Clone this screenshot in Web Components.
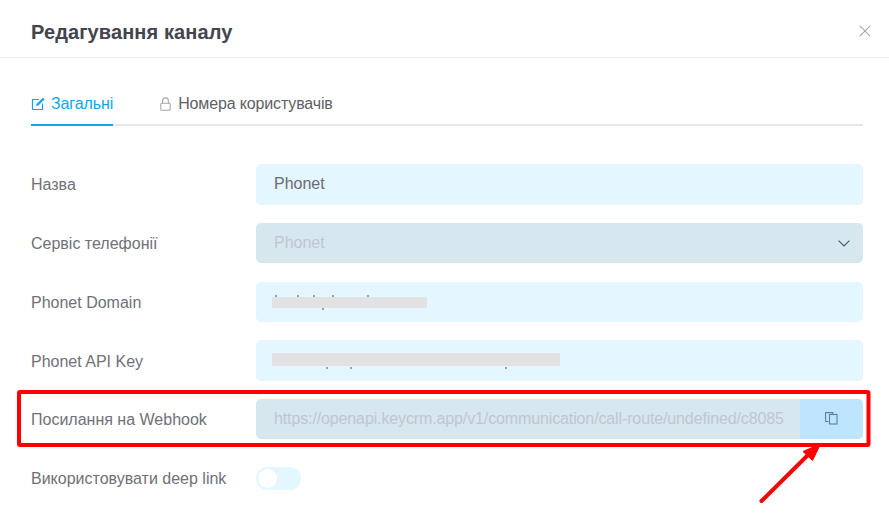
<!DOCTYPE html>
<html lang="uk">
<head>
<meta charset="utf-8">
<title>Редагування каналу</title>
<style>
  html, body { margin: 0; padding: 0; background: #fff; overflow: hidden; }
  body { font-family: "Liberation Sans", Arial, sans-serif; }
</style>
</head>
<body>
<edit-dialog heading="Редагування каналу">
  <tab-bar>
    <tab-item active icon="edit">Загальні</tab-item>
    <tab-item icon="lock">Номера користувачів</tab-item>
  </tab-bar>
  <form-row label="Назва"><text-box value="Phonet"></text-box></form-row>
  <form-row label="Сервіс телефонії"><text-box value="Phonet" disabled select></text-box></form-row>
  <form-row label="Phonet Domain"><text-box smudge="155" smudge-top="15" smudge-height="11" specks="19,13 41,13 57,13 76,13 111,13 66,26"></text-box></form-row>
  <form-row label="Phonet API Key"><text-box smudge="288" smudge-top="13" smudge-height="13" specks="70,27 94,27 249,27"></text-box></form-row>
  <form-row label="Посилання на Webhook"><text-box class="url" value="https://openapi.keycrm.app/v1/communication/call-route/undefined/c8085" disabled copy></text-box></form-row>
  <form-row label="Використовувати deep link"><toggle-switch></toggle-switch></form-row>
</edit-dialog>
<red-callout></red-callout>

<script>
class EditDialog extends HTMLElement {
    constructor() {
        super()
        this.attachShadow({mode: "open"})
    }
    connectedCallback() {
        this.shadowRoot.innerHTML = `
        <style>
            :host { display: block; width: 889px; height: 518px; overflow: hidden; box-sizing: border-box; }
            header {
                display: flex;
                align-items: center;
                justify-content: space-between;
                height: 58px;
                padding: 8px 18px 0 31px;
                box-sizing: border-box;
                border-bottom: 1px solid #ebedf0;
            }
            h1 { margin: 0; font-size: 20px; font-weight: 700; color: #43444d; letter-spacing: .1px; }
            svg { display: block; margin-top: -3px; }
            main { padding: 0 26px 0 31px; }
        </style>
        <header>
            <h1>${this.getAttribute("heading")}</h1>
            <svg width="12" height="12" viewBox="0 0 12 12" fill="none" stroke="#a4a7b0" stroke-width="1.1"><path d="M.7.7l10.6 10.6M11.3.7L.7 11.3"/></svg>
        </header>
        <main><slot></slot></main>`
    }
}

class TabBar extends HTMLElement {
    constructor() {
        super()
        this.attachShadow({mode: "open"})
        this.shadowRoot.innerHTML = `
        <style>
            :host {
                display: flex;
                gap: 47px;
                height: 68px;
                margin-bottom: 38.3px;
                box-sizing: border-box;
                border-bottom: 2px solid #e4e7ed;
            }
        </style>
        <slot></slot>`
    }
}

class TabItem extends HTMLElement {
    constructor() {
        super()
        this.attachShadow({mode: "open"})
    }
    connectedCallback() {
        const icons = {
            edit: `<svg width="14" height="14" viewBox="0 0 14 14" fill="none" stroke="currentColor" stroke-width="1.2"><path d="M8 2.5H1.5v10h10V6.5"/><path d="M5.5 8.7l.4-1.9L12 1l1.3 1.3-6 5.9z" fill="currentColor" stroke-width=".6"/></svg>`,
            lock: `<svg width="11" height="14" viewBox="0 0 11 14" fill="none" stroke="#a9a9a9" stroke-width="1.1"><path d="M2.6 6.5V3.8a2.9 2.9 0 0 1 5.8 0v2.7"/><rect x=".8" y="6.3" width="9.4" height="6.9" rx=".8"/></svg>`
        }
        this.shadowRoot.innerHTML = `
        <style>
            :host {
                display: flex;
                align-items: center;
                gap: 7px;
                height: 68px;
                padding-top: 24px;
                box-sizing: border-box;
                margin-bottom: -2px;
                font-size: 16px;
                letter-spacing: -.15px;
                color: #5f6068;
            }
            :host([active]) { gap: 6px; letter-spacing: -.1px; color: #0ba8ee; border-bottom: 2px solid #0ba8ee; padding-top: 26px; }
            svg { display: block; }
        </style>
        ${icons[this.getAttribute("icon")]}<slot></slot>`
    }
}

class FormRow extends HTMLElement {
    constructor() {
        super()
        this.attachShadow({mode: "open"})
    }
    connectedCallback() {
        this.shadowRoot.innerHTML = `
        <style>
            :host {
                display: grid;
                grid-template-columns: 225px 607px;
                align-items: center;
                height: 40.4px;
                margin-bottom: 18.3px;
                font-size: 16px;
                color: #707178;
            }
            .label { padding-top: 2px; }
        </style>
        <div class="label">${this.getAttribute("label")}</div>
        <div><slot></slot></div>`
    }
}

class TextBox extends HTMLElement {
    constructor() {
        super()
        this.attachShadow({mode: "open"})
    }
    connectedCallback() {
        const value = this.getAttribute("value") || ""
        const smudge = this.getAttribute("smudge")
        const chevron = this.hasAttribute("select")
            ? `<svg class="chevron" width="12" height="7" viewBox="0 0 12 7" fill="none" stroke="#4d5560" stroke-width="1.1"><path d="M.6.6L6 6l5.4-5.4"/></svg>` : ""
        const copy = this.hasAttribute("copy")
            ? `<button tabindex="-1"><svg width="13" height="13" viewBox="0 0 13 13" fill="none" stroke="#5a7fa3" stroke-width="1.1"><path d="M3.5 9.5H.6V.6h7.2v1.9"/><rect x="4.5" y="2.5" width="7.5" height="9.5" fill="#bde5fd"/></svg></button>` : ""
        // small bits of the hidden text that stick out around the grey smudge
        const specks = (this.getAttribute("specks") || "").split(" ").filter(Boolean).map(p => {
            const [x, y] = p.split(",")
            return `<b style="left:${x}px;top:${y}px"></b>`
        }).join("")
        const smudgeBox = smudge
            ? `<div class="smudge" style="width:${smudge}px;top:${this.getAttribute("smudge-top")}px;height:${this.getAttribute("smudge-height")}px"></div>` : ""
        this.shadowRoot.innerHTML = `
        <style>
            :host {
                display: flex;
                position: relative;
                height: 40.4px;
                border-radius: 5px;
                overflow: hidden;
                background: #e4f6ff;
                color: #6b6c74;
                font-size: 16px;
            }
            :host([disabled]) { background: #d7e7f0; color: #c0c6d0; }
            :host(.url) { letter-spacing: -.125px; }
            .value {
                flex: 1;
                min-width: 0;
                padding: 0 18px;
                display: flex;
                align-items: center;
                white-space: nowrap;
            }
            .chevron { align-self: center; margin-right: 13px; }
            button {
                width: 63px;
                border: 0;
                padding: 0 0 2px;
                background: #bde5fd;
                display: flex;
                align-items: center;
                justify-content: center;
            }
            .smudge {
                position: absolute;
                left: 16px;
                border-radius: 2px;
                background: #e2e2e2;
                filter: blur(.6px);
            }
            b {
                position: absolute;
                width: 1.5px;
                height: 2px;
                background: #a0a1a6;
                filter: blur(.3px);
            }
        </style>
        <div class="value"><span>${value}</span></div>
        ${chevron}${copy}
        ${smudgeBox}${specks}`
    }
}

class ToggleSwitch extends HTMLElement {
    constructor() {
        super()
        this.attachShadow({mode: "open"})
        this.shadowRoot.innerHTML = `
        <style>
            :host {
                display: block;
                position: relative;
                width: 45px;
                height: 23px;
                margin-top: 1px;
                border-radius: 12px;
                background: #e4f6ff;
            }
            i {
                position: absolute;
                left: 2px;
                top: 2px;
                width: 19px;
                height: 19px;
                border-radius: 50%;
                background: #fff;
            }
        </style>
        <i></i>`
    }
}

// annotation drawn on top of the screenshot
class RedCallout extends HTMLElement {
    constructor() {
        super()
        this.attachShadow({mode: "open"})
        this.shadowRoot.innerHTML = `
        <style>
            :host { position: absolute; left: 0; top: 0; width: 889px; height: 518px; pointer-events: none; }
        </style>
        <svg width="889" height="518" viewBox="0 0 889 518" fill="none">
            <rect x="19" y="392" width="849.5" height="53" rx="1" stroke="#ff0000" stroke-width="4"/>
            <path d="M761.5 501L811 452" stroke="#ff0000" stroke-width="4" stroke-linecap="round"/>
            <path d="M820.5 444L803 451.5L812.5 460.5z" fill="#ff0000" stroke="#ff0000" stroke-width="1"/>
        </svg>`
    }
}

customElements.define("edit-dialog", EditDialog)
customElements.define("tab-bar", TabBar)
customElements.define("tab-item", TabItem)
customElements.define("form-row", FormRow)
customElements.define("text-box", TextBox)
customElements.define("toggle-switch", ToggleSwitch)
customElements.define("red-callout", RedCallout)
</script>
</body>
</html>
